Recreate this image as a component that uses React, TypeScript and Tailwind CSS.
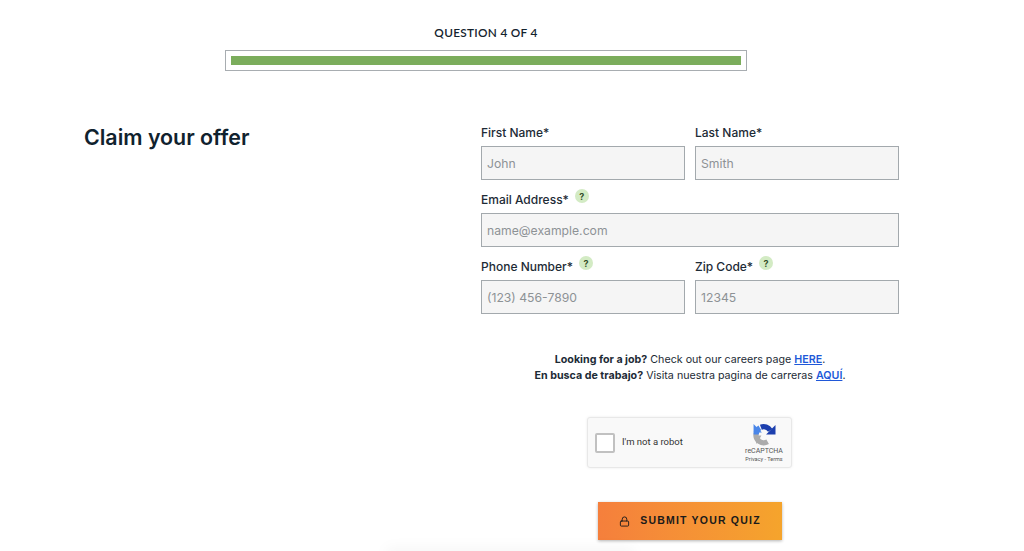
import { Lock } from 'lucide-react';

const bodyFont = "font-['Inter','Liberation_Sans',sans-serif]";

function Hint() {
  return (
    <span className="ml-[6px] mb-[7px] flex h-[14px] w-[14px] items-center justify-center rounded-full bg-[#d3ebc4] text-[9px] font-bold leading-none text-[#33502a]">
      ?
    </span>
  );
}

function Field({
  label,
  placeholder,
  hint,
  className,
}: {
  label: string;
  placeholder: string;
  hint?: boolean;
  className?: string;
}) {
  return (
    <div className={className}>
      <div className="flex h-[20px] items-center pt-[1px] text-[12px] font-medium leading-none text-[#1d2b36]">
        {label}
        {hint && <Hint />}
      </div>
      <input
        readOnly
        placeholder={placeholder}
        className="mt-[4px] block h-[34px] w-full border border-[#a3a9ad] bg-[#f5f5f5] px-[5px] text-[12.2px] text-[#1d2b36] outline-none placeholder:text-[#8d9295]"
      />
    </div>
  );
}

export default function App() {
  return (
    <div className={`relative h-[551px] w-[1024px] overflow-hidden bg-white ${bodyFont}`}>
      {/* Progress */}
      <div className="ml-[225px] w-[522px] pt-[25px]">
        <div className="text-center font-['Lato',sans-serif] text-[11.8px] font-semibold leading-[15px] tracking-[0.3px] text-[#14232e]">
          QUESTION 4 OF 4
        </div>
        <div className="mt-[10px] h-[21px] border border-[#a8adb1] p-[5px]">
          <div className="h-[9px] w-full bg-[#7bad5c]" />
        </div>
      </div>

      <div className="mt-[50px] flex pl-[84px]">
        <h1 className="w-[397px] pt-[2px] text-[21.4px] font-semibold leading-[28px] text-[#10222e]">
          Claim your offer
        </h1>

        <div className="w-[418px] pt-[1px]">
          <div className="grid grid-cols-2 gap-x-[10px] gap-y-[9px]">
            <Field label="First Name*" placeholder="John" />
            <Field label="Last Name*" placeholder="Smith" />
            <Field className="col-span-2" label="Email Address*" placeholder="name@example.com" hint />
            <Field label="Phone Number*" placeholder="(123) 456-7890" hint />
            <Field label="Zip Code*" placeholder="12345" hint />
          </div>

          <div className="mt-[38px] text-center text-[10.7px] leading-[16px] text-[#1d2b36]">
            <p>
              <b className="font-bold">Looking for a job?</b> Check out our careers page{' '}
              <a href="#" className="font-semibold text-[#2058d8] underline">HERE</a>.
            </p>
            <p>
              <b className="font-bold">En busca de trabajo?</b> Visita nuestra pagina de carreras{' '}
              <a href="#" className="font-semibold text-[#2058d8] underline">AQUÍ</a>.
            </p>
          </div>

          {/* reCAPTCHA */}
          <div className="ml-[106px] mt-[33px] flex h-[51px] w-[205px] items-center rounded-[3px] border border-[#e8e8e8] bg-[#f9f9f9] pl-[7px] shadow-[0_0_3px_rgba(0,0,0,0.08)] font-['Roboto',sans-serif]">
            <span className="h-[20px] w-[20px] rounded-[2px] border-2 border-[#c1c1c1] bg-white" />
            <span className="ml-[7px] text-[9.500px] text-[#333]">I'm not a robot</span>
            <div className="ml-auto mr-[7px] flex w-[40px] flex-col items-center">
              <svg width="24" height="23" viewBox="0 0 22 22" fill="none">
                <path d="M3.500 10A7.500 7.500 0 0 0 14.500 18" stroke="#ababab" strokeWidth="5" />
                <path d="M1 12 8.500 12 4 20z" fill="#ababab" />
                <path d="M3.500 11A7.500 7.500 0 0 1 7 4.500" stroke="#4a86e8" strokeWidth="5" />
                <path d="M1 1 9 9H1z" fill="#4a86e8" />
                <path d="M8 4A7.500 7.500 0 0 1 17 7" stroke="#1c3fae" strokeWidth="5" />
                <path d="M22 2V11H13z" fill="#1c3fae" />
              </svg>
              <span className="mt-[1px] text-[7px] leading-[8px] text-[#555]">reCAPTCHA</span>
              <span className="whitespace-nowrap text-[5.500px] leading-[8px] text-[#555]">Privacy - Terms</span>
            </div>
          </div>

          {/* Submit */}
          <button className="ml-[117px] mt-[34px] flex h-[38px] w-[184px] items-center justify-center bg-gradient-to-r from-[#f57f3c] to-[#f5a42c] font-['Liberation_Sans',sans-serif] text-[10.500px] font-bold tracking-[1.200px] text-[#1a1a1a] shadow-[0_1px_3px_rgba(0,0,0,0.3)]">
            <Lock className="mr-[10px] h-[11px] w-[11px]" strokeWidth={2} />
            SUBMIT YOUR QUIZ
          </button>
        </div>
      </div>

      {/* faint shadow of a panel below the fold */}
      <div className="absolute bottom-[-12px] left-[385px] h-[16px] w-[250px] rounded-full bg-black/[0.03] blur-[6px]" />
    </div>
  );
}
